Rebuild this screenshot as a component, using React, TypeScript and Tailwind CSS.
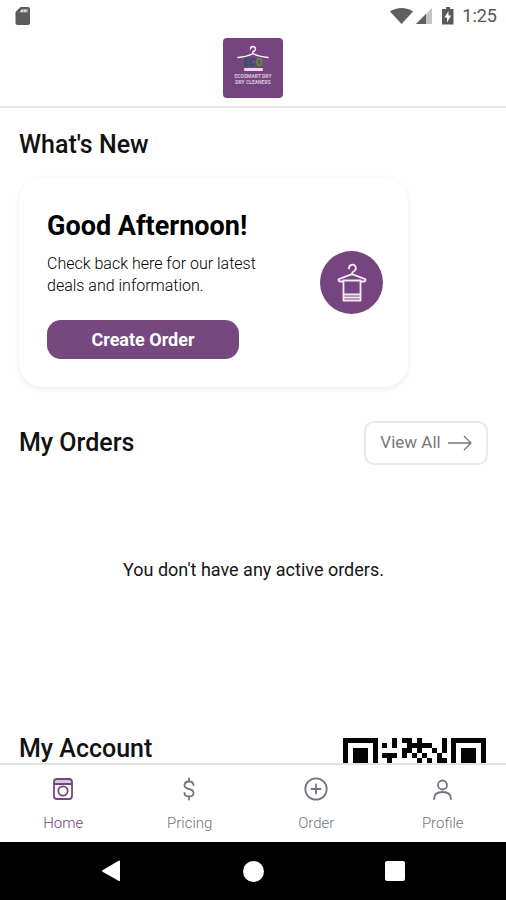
import type { ReactNode } from "react";

const qrRows = [
  "11111110001011010000101111111",
  "10000010101001111100101000001",
  "10111010000011010010101011101",
  "10111010111010101001001011101",
  "10111010010000010101101011101",
  "10000010100110110001001000001",
];

function StatusBar() {
  return (
    <div className="flex h-[31px] items-center justify-between pl-[14px] pr-[9px]">
      <svg width="17" height="20" viewBox="0 0 17 20" aria-hidden="true">
        <path d="M6.500 1H14q2 0 2 2v14q0 2-2 2H3.500q-2 0-2-2V6z" fill="#5c5c5c" />
        <path d="M5.500 5.500L8 3h6v3.500H5.500z" fill="#a5a5a5" />
        <path d="M8 4v2M11 4v2" stroke="#f4f4f4" strokeWidth="1.500" />
      </svg>
      <div className="flex items-center">
        <svg width="66" height="20" viewBox="0 0 66 20" className="mr-[6px]" aria-hidden="true">
          <path d="M0 5.500C6 .8 17 .8 23 5.500L11.500 18z" fill="#5f5f5f" />
          <path d="M42 2v16H26z" fill="#c4c4c4" />
          <path d="M36 8v10H26z" fill="#5f5f5f" />
          <path d="M56 1h4v2h3.500v15.500H52V3h4z" fill="#5a5a5a" />
          <path d="M58.500 5L54.500 11.500h2.600V16.500l3.900-7h-2.500z" fill="#fff" />
        </svg>
        <span className="text-lg text-[#555]">1:25</span>
      </div>
    </div>
  );
}

function Logo() {
  return (
    <div className="relative size-[60px] overflow-hidden rounded-[4px] bg-[#764580]">
      <svg className="block" width="60" height="60" viewBox="0 0 60 60" aria-hidden="true">
        <path
          d="M27.500 11q0-2.500 2.500-2.500t2.500 2.500q0 2-2.500 2.500v2.500M15 19.500q10-1 15-4q5 3 15 4"
          fill="none"
          stroke="#fff"
          strokeWidth="1.400"
          strokeLinecap="round"
        />
        <rect x="21" y="30" width="19" height="3" rx="1" fill="#e8dcea" />
      </svg>
      <span className="absolute inset-x-0 top-[20px] text-center text-[10px] leading-[10px] font-black text-[#1f5560]">
        EC<span className="text-[#5f8f2a]">O</span>
      </span>
      <span className="absolute inset-x-0 top-[35px] text-center text-[5px] leading-[6px] font-bold text-[#d9c5dd]">
        ECOSMART DRY
        <br />
        DRY CLEANERS
      </span>
    </div>
  );
}

function HangerIcon() {
  return (
    <svg width="30" height="40" viewBox="0 0 30 40" fill="none" stroke="#f6e9f8" strokeWidth="1.800" strokeLinejoin="round" strokeLinecap="round" aria-hidden="true">
      <path d="M12 5.500a3.400 3.400 0 1 1 4.800 2.700Q15 9 15 11.500" />
      <path d="M6 18.500H3q-2-.3-1.200-2.300L15 11.200l13.200 5q.8 2-1.200 2.300h-3" />
      <path d="M6.500 17.500h17v20h-17zM6.500 31.500h17M6.500 34.500h17" />
    </svg>
  );
}

const heading = "text-[25px] leading-8 font-medium text-[#111]";

function Tab({ label, active, children }: { label: string; active?: boolean; children: ReactNode }) {
  return (
    <button
      className={`flex flex-1 flex-col items-center gap-[11px] pt-[11px] text-[15px] leading-5 font-light ${active ? "text-[#764580]" : "text-[#74747d]"}`}
      aria-current={active ? "page" : undefined}
    >
      <svg width="26" height="26" viewBox="0 0 26 26" fill="none" stroke="currentColor" strokeWidth="1.800" strokeLinecap="round" strokeLinejoin="round" aria-hidden="true">
        {children}
      </svg>
      {label}
    </button>
  );
}

export default function App() {
  return (
    <div className="flex h-screen flex-col overflow-hidden bg-[#fefefe] font-['Roboto',sans-serif]">
      <StatusBar />
      <header className="flex h-[77px] shrink-0 justify-center border-b-2 border-[#e8e8e8] pt-[7px]">
        <Logo />
      </header>

      <main className="flex min-h-0 flex-1 flex-col overflow-hidden pt-[21px] pr-[18px] pl-[19px]">
        <h2 className={heading}>What's New</h2>
        <section className="mt-[17px] flex w-[389px] items-center justify-between rounded-[24px] bg-white px-7 pt-8 pb-7 shadow-[0_2px_6px_rgba(0,0,0,0.07)]">
          <div>
            <h1 className="text-[27px] leading-8 font-bold text-black">Good Afternoon!</h1>
            <p className="mt-[11px] text-base leading-[22px] font-light text-black">
              Check back here for our latest
              <br />
              deals and information.
            </p>
            <button className="mt-[23px] h-[39px] w-[192px] rounded-[14px] bg-[#754880] text-lg font-bold text-white">
              Create Order
            </button>
          </div>
          <div className="-mr-[3px] mb-1 flex size-[63px] items-center justify-center rounded-full bg-[#764580]">
            <HangerIcon />
          </div>
        </section>

        <div className="mt-[34px] flex items-center justify-between">
          <h2 className={heading}>My Orders</h2>
          <button className="flex h-[44px] w-[124px] items-center justify-center gap-[7px] rounded-[10px] border-2 border-[#e9e9e9] bg-white text-[17px] text-[#777]">
            View All
            <svg width="24" height="16" viewBox="0 0 24 16" fill="none" stroke="#777" strokeWidth="1.300" aria-hidden="true">
              <path d="M0 8h23M16 1l7 7-7 7" />
            </svg>
          </button>
        </div>
        <p className="mt-[91px] text-center text-lg text-[#151515]">You don't have any active orders.</p>

        <div className="mt-[149px] flex items-start justify-between">
          <h2 className={heading}>My Account</h2>
          <svg className="mt-[5px] mr-[2px]" width="143" height="30" viewBox="0 0 29 6" preserveAspectRatio="none" shapeRendering="crispEdges" role="img" aria-label="Account QR code">
            {qrRows.map((row, y) =>
              [...row].map((cell, x) =>
                cell === "1" ? <rect key={`${x}-${y}`} x={x} y={y} width="1" height="1" fill="#050505" /> : null,
              ),
            )}
          </svg>
        </div>
      </main>

      <nav className="flex h-[79px] shrink-0 items-start border-t-2 border-[#e2e2e2] bg-white" aria-label="Main">
        <Tab label="Home" active>
          <path d="M4 3h18v5H4z" fill="#d9c8dd" stroke="none" />
          <rect x="4" y="3" width="18" height="20" rx="3" />
          <path d="M4 8h18" />
          <circle cx="13" cy="15" r="4.700" />
        </Tab>
        <Tab label="Pricing">
          <path d="M12 2.500v3M12 20.500v3M16.500 9q-.3-3.500-4.500-3.500T7.500 9q0 3 4.500 4t4.500 4q0 3.500-4.500 3.500T7.500 17" />
        </Tab>
        <Tab label="Order">
          <circle cx="13" cy="13" r="10.700" />
          <path d="M13 8.500v9M8.500 13h9" />
        </Tab>
        <Tab label="Profile">
          <circle cx="12.500" cy="9" r="4.500" />
          <path d="M4 23q0-7 8.500-7t8.500 7" />
        </Tab>
      </nav>

      <div className="flex h-[58px] shrink-0 items-center justify-center bg-black">
        <div className="flex w-[304px] items-center justify-between">
          <button aria-label="Back">
            <svg width="20" height="22" viewBox="0 0 20 22" className="block fill-white">
              <path d="M18 .5q1 0 1 1v19q0 1-1 .5L1.500 11.800q-1-.8 0-1.600z" />
            </svg>
          </button>
          <button aria-label="Home screen" className="size-[21px] rounded-full bg-white" />
          <button aria-label="Recent apps" className="size-5 rounded-[2px] bg-white" />
        </div>
      </div>
    </div>
  );
}
